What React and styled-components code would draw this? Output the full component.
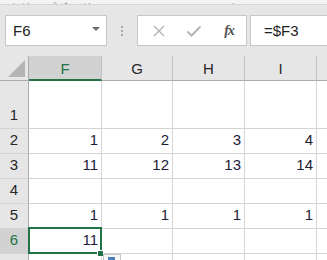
import React from 'react';
import styled, { createGlobalStyle, css } from 'styled-components';

const GlobalStyle = createGlobalStyle`
  html, body {
    margin: 0;
    padding: 0;
    background: #e6e6e6;
    overflow: hidden;
  }
  body {
    font-family: "Liberation Sans", Arial, sans-serif;
  }
`

const Page = styled.div`
  width: 327px;
  height: 260px;
  overflow: hidden;
  position: relative;
`

const RibbonEdge = styled.div`
  height: 4px;
  background: #f3f3f3;
  border-bottom: 1px solid #d6d6d6;
  overflow: hidden;
  display: flex;
  align-items: flex-end;
`

const GroupLabel = styled.span`
  font-size: 12px;
  line-height: 12px;
  color: #6a6a6a;
  margin-left: ${p => p.left}px;
  margin-bottom: -10px;
  white-space: nowrap;
`

const FormulaBar = styled.div`
  display: flex;
  align-items: stretch;
  height: 31px;
  padding: 10px 0 10px 5px;
`

const NameBox = styled.div`
  width: 102px;
  box-sizing: border-box;
  border: 1px solid #c6c6c6;
  background: #fff;
  display: flex;
  align-items: center;
  justify-content: space-between;
  padding: 0 6px 0 7px;
  font-size: 15px;
  color: #222;
`

const DropArrow = styled.span`
  width: 0;
  height: 0;
  border-left: 4px solid transparent;
  border-right: 4px solid transparent;
  border-top: 4px solid #6d6d6d;
  margin-top: -3px;
`

const Grip = styled.div`
  width: 30px;
  display: flex;
  flex-direction: column;
  align-items: center;
  justify-content: center;
  gap: 2px;
`

const Dot = styled.span`
  width: 2px;
  height: 2px;
  background: #a8a8a8;
`

const ButtonBox = styled.div`
  width: 110px;
  box-sizing: border-box;
  border: 1px solid #c6c6c6;
  background: #fff;
  display: flex;
  align-items: center;
  padding-left: 11px;
`

const IconSlot = styled.span`
  width: ${p => p.w}px;
  display: flex;
  justify-content: center;
  align-items: center;
`

const Fx = styled.span`
  font-family: "Liberation Serif", "DejaVu Serif", serif;
  font-style: italic;
  font-weight: bold;
  font-size: 14px;
  color: #505050;
  letter-spacing: -1px;
`

const FormulaInput = styled.div`
  flex: 1;
  margin-left: 3px;
  border: 1px solid #c6c6c6;
  border-right: none;
  background: #fff;
  display: flex;
  align-items: center;
  padding-left: 13px;
  font-size: 15px;
  color: #222;
`

const Sheet = styled.div`
  display: grid;
  grid-template-columns: 29px 73px 71px 72px 72px 72px;
  grid-template-rows: 25px 48px repeat(6, 25px);
  background: #fff;
`

const Cell = styled.div`
  box-sizing: border-box;
  border-right: 1px solid #d4d4d4;
  border-bottom: 1px solid #d4d4d4;
  display: flex;
  align-items: flex-end;
  justify-content: flex-end;
  padding: 0 3px 5px 0;
  font-size: 15px;
  color: #1d1d3a;
  position: relative;

  ${p => p.selected && css`
    &::after {
      content: "";
      position: absolute;
      left: -1px;
      top: -2px;
      right: -1px;
      bottom: -1px;
      border: 2px solid #217346;
      pointer-events: none;
      z-index: 2;
    }
  `}
`

const Handle = styled.span`
  position: absolute;
  right: -3px;
  bottom: -4px;
  width: 5px;
  height: 5px;
  background: #217346;
  border: 1px solid #fff;
  z-index: 3;
`

const PasteTag = styled.span`
  position: absolute;
  left: 1px;
  bottom: -7px;
  width: 18px;
  height: 6px;
  box-sizing: border-box;
  border: 1px solid #c6c6c6;
  border-bottom: none;
  background: #f8f8f8;
  z-index: 3;

  &::before {
    content: "";
    position: absolute;
    left: 4px;
    top: 2px;
    width: 7px;
    height: 4px;
    background: #4a7ebb;
  }
`

const Corner = styled.div`
  background: #e6e6e6;
  border-right: 1px solid #ababab;
  border-bottom: 1px solid #ababab;
  box-sizing: border-box;
  position: relative;

  &::after {
    content: "";
    position: absolute;
    right: 3px;
    bottom: 3px;
    width: 0;
    height: 0;
    border-left: 17px solid transparent;
    border-bottom: 17px solid #b4b4b4;
  }
`

const ColHead = styled.div`
  box-sizing: border-box;
  background: ${p => (p.active ? '#d2d2d2' : '#e6e6e6')};
  border-right: 1px solid #c4c4c4;
  border-bottom: ${p => (p.active ? '2px solid #217346' : '1px solid #ababab')};
  display: flex;
  align-items: center;
  justify-content: center;
  font-size: 15px;
  color: ${p => (p.active ? '#217346' : '#262626')};
  padding-top: ${p => (p.active ? 1 : 0)}px;
`

const RowHead = styled.div`
  box-sizing: border-box;
  background: ${p => (p.active ? '#d2d2d2' : '#e6e6e6')};
  border-right: 1px solid #ababab;
  border-bottom: 1px solid #d4d4d4;
  display: flex;
  align-items: flex-end;
  justify-content: center;
  padding-bottom: 5px;
  font-size: 15px;
  color: ${p => (p.active ? '#217346' : '#262626')};
`

const XIcon = () => (
  <svg width="14" height="14" viewBox="0 0 14 14">
    <path d="M2 2 L12 12 M12 2 L2 12" stroke="#b5b5b5" strokeWidth="1.4" fill="none" />
  </svg>
)

const CheckIcon = () => (
  <svg width="16" height="14" viewBox="0 0 16 14">
    <path d="M1.5 7.5 L5.5 11.5 L14.5 2.5" stroke="#b5b5b5" strokeWidth="2" fill="none" />
  </svg>
)

// J is off the right edge, so its header label stays blank
const columns = ['F', 'G', 'H', 'I', '']
const rows = [
  [1, ['', '', '', '', '']],
  [2, [1, 2, 3, 4, '']],
  [3, [11, 12, 13, 14, '']],
  [4, ['', '', '', '', '']],
  [5, [1, 1, 1, 1, '']],
  [6, [11, '', '', '', '']],
  [7, ['', '', '', '', '']],
]

export default function App() {
  return (
    <Page>
      <GlobalStyle />
      <RibbonEdge>
        <GroupLabel left={8}>クリップボード</GroupLabel>
        <GroupLabel left={100}>フォント</GroupLabel>
      </RibbonEdge>
      <FormulaBar>
        <NameBox>
          <span>F6</span>
          <DropArrow />
        </NameBox>
        <Grip>
          <Dot /><Dot /><Dot />
        </Grip>
        <ButtonBox>
          <IconSlot w={20}><XIcon /></IconSlot>
          <IconSlot w={50}><CheckIcon /></IconSlot>
          <IconSlot w={20}><Fx>fx</Fx></IconSlot>
        </ButtonBox>
        <FormulaInput>=$F3</FormulaInput>
      </FormulaBar>
      <Sheet>
        <Corner />
        {columns.map((c, i) => (
          <ColHead key={i} active={c === 'F'}>{c}</ColHead>
        ))}
        {rows.map(([n, vals]) => (
          <React.Fragment key={n}>
            <RowHead active={n === 6}>{n}</RowHead>
            {vals.map((v, i) => {
              const sel = n === 6 && i === 0
              return (
                <Cell key={i} selected={sel}>
                  {v}
                  {sel && <Handle />}
                  {n === 6 && i === 1 && <PasteTag />}
                </Cell>
              )
            })}
          </React.Fragment>
        ))}
      </Sheet>
    </Page>
  )
}
